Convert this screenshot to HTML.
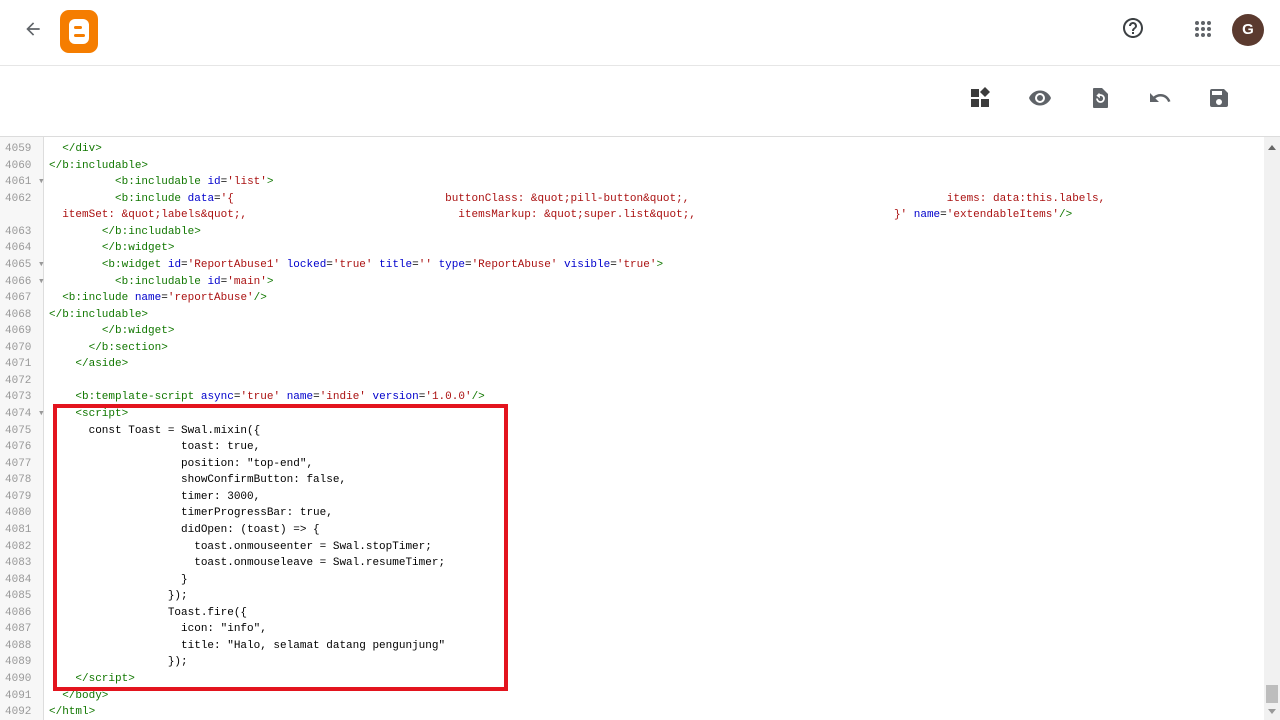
<!DOCTYPE html>
<html><head><meta charset="utf-8"><style>
*{margin:0;padding:0;box-sizing:border-box}
body{width:1280px;height:720px;overflow:hidden;background:#fff;font-family:"Liberation Sans",sans-serif;position:relative}
.top{position:absolute;left:0;top:0;width:1280px;height:66px;border-bottom:1px solid #e6e6e6}
.tb{position:absolute;left:0;top:66px;width:1280px;height:71px;border-bottom:1px solid #dcdcdc}
.ed{position:absolute;left:0;top:137px;width:1264px;height:583px;overflow:hidden}
.gut{position:absolute;left:0;top:0;width:44px;height:583px;background:#f7f7f7;border-right:1px solid #ddd}
pre{font-family:"Liberation Mono","DejaVu Sans Mono",monospace;font-size:11px;line-height:16.56px;position:absolute;top:4px;white-space:pre;color:#000}
.nums{left:0;width:44px;color:#999}
.nums span{display:block;padding-left:5px}
.code{left:49px}
.t{color:#170}.a{color:#00c}.s{color:#a11}
.sb{position:absolute;left:1264px;top:137px;width:16px;height:583px;background:#f1f1f1}
.box{position:absolute;left:53px;top:404px;width:455px;height:287px;border:4px solid #e3141e}
</style></head><body>
<div class="top">
<svg style="position:absolute;left:23px;top:19px" width="20" height="20" viewBox="0 0 24 24"><path d="M20 11H7.8l5.6-5.6L12 4l-8 8 8 8 1.4-1.4L7.8 13H20z" fill="#5f6368"/></svg>
<svg style="position:absolute;left:60px;top:10px" width="38" height="43" viewBox="0 0 38 43"><rect width="38" height="43" rx="9" fill="#f57d00"/><rect x="9" y="9" width="20" height="25" rx="6" fill="#fff"/><rect x="14" y="16" width="8" height="3" rx="1.5" fill="#f57d00"/><rect x="14" y="24" width="11" height="3" rx="1.5" fill="#f57d00"/></svg>
<svg style="position:absolute;left:1121px;top:16px" width="24" height="24" viewBox="0 0 24 24"><path d="M11 18h2v-2h-2v2zm1-16C6.48 2 2 6.48 2 12s4.48 10 10 10 10-4.48 10-10S17.52 2 12 2zm0 18c-4.41 0-8-3.59-8-8s3.59-8 8-8 8 3.59 8 8-3.59 8-8 8zm0-14c-2.21 0-4 1.79-4 4h2c0-1.1.9-2 2-2s2 .9 2 2c0 2-3 1.75-3 5h2c0-2.25 3-2.5 3-5 0-2.21-1.79-4-4-4z" fill="#3c4043"/></svg>
<svg style="position:absolute;left:1191px;top:17px" width="24" height="24" viewBox="0 0 24 24" fill="#5f6368"><circle cx="6" cy="6" r="2"/><circle cx="12" cy="6" r="2"/><circle cx="18" cy="6" r="2"/><circle cx="6" cy="12" r="2"/><circle cx="12" cy="12" r="2"/><circle cx="18" cy="12" r="2"/><circle cx="6" cy="18" r="2"/><circle cx="12" cy="18" r="2"/><circle cx="18" cy="18" r="2"/></svg>
<div style="position:absolute;left:1232px;top:14px;width:32px;height:32px;border-radius:50%;background:#5b3a2f;color:#fff;font-size:15px;font-weight:bold;text-align:center;line-height:32px">G</div>
</div>
<div class="tb">
<svg style="position:absolute;left:968px;top:20px" width="24" height="24" viewBox="0 0 24 24" fill="#3c3c3c"><rect x="3" y="3" width="8" height="8"/><rect x="3" y="13" width="8" height="8"/><rect x="13" y="13" width="8" height="8"/><path d="M17 1l5 5-5 5-5-5z"/></svg>
<svg style="position:absolute;left:1028px;top:20px" width="24" height="24" viewBox="0 0 24 24"><path d="M12 4.5C7 4.5 2.7 7.6 1 12c1.7 4.4 6 7.5 11 7.5s9.3-3.1 11-7.5c-1.7-4.4-6-7.5-11-7.5zM12 17a5 5 0 110-10 5 5 0 010 10zm0-8a3 3 0 100 6 3 3 0 000-6z" fill="#5f6368"/></svg>
<svg style="position:absolute;left:1088px;top:20px" width="24" height="24" viewBox="0 0 24 24"><path d="M6 2h8l6 6v13a1 1 0 01-1 1H6a1 1 0 01-1-1V3a1 1 0 011-1z" fill="#5f6368"/><path d="M9 12.5a3.5 3.5 0 103.5-3.5H11M11 7.5v3l-2-1.5" stroke="#fff" stroke-width="1.8" fill="none"/></svg>
<svg style="position:absolute;left:1148px;top:20px" width="24" height="24" viewBox="0 0 24 24"><path d="M12.5 8c-2.65 0-5.05.99-6.9 2.6L2 7v9h9l-3.62-3.62c1.39-1.16 3.16-1.880 5.12-1.88 3.54 0 6.55 2.31 7.6 5.5l2.37-.78C21.08 11.03 17.15 8 12.5 8z" fill="#5f6368"/></svg>
<svg style="position:absolute;left:1207px;top:20px" width="24" height="24" viewBox="0 0 24 24"><path d="M17 3H5a2 2 0 00-2 2v14a2 2 0 002 2h14a2 2 0 002-2V7l-4-4zm-5 16a3 3 0 110-6 3 3 0 010 6zm3-10H5V5h10v4z" fill="#5f6368"/></svg>
</div>
<div class="ed">
<div class="gut"></div>
<pre class="nums"><span>4059</span><span>4060</span><span>4061 ▾</span><span>4062</span><span> </span><span>4063</span><span>4064</span><span>4065 ▾</span><span>4066 ▾</span><span>4067</span><span>4068</span><span>4069</span><span>4070</span><span>4071</span><span>4072</span><span>4073</span><span>4074 ▾</span><span>4075</span><span>4076</span><span>4077</span><span>4078</span><span>4079</span><span>4080</span><span>4081</span><span>4082</span><span>4083</span><span>4084</span><span>4085</span><span>4086</span><span>4087</span><span>4088</span><span>4089</span><span>4090</span><span>4091</span><span>4092</span></pre>
<pre class="code"><span class="t">  &lt;/div&gt;</span>
<span class="t">&lt;/b:includable&gt;</span>
          <span class="t">&lt;b:includable</span> <span class="a">id</span>=<span class="s">'list'</span><span class="t">&gt;</span>
          <span class="t">&lt;b:include</span> <span class="a">data</span>=<span class="s">'{                                buttonClass: &amp;quot;pill-button&amp;quot;,                                       items: data:this.labels,</span>
<span class="s">  itemSet: &amp;quot;labels&amp;quot;,                                itemsMarkup: &amp;quot;super.list&amp;quot;,                              }'</span> <span class="a">name</span>=<span class="s">'extendableItems'</span><span class="t">/&gt;</span>
        <span class="t">&lt;/b:includable&gt;</span>
        <span class="t">&lt;/b:widget&gt;</span>
        <span class="t">&lt;b:widget</span> <span class="a">id</span>=<span class="s">'ReportAbuse1'</span> <span class="a">locked</span>=<span class="s">'true'</span> <span class="a">title</span>=<span class="s">''</span> <span class="a">type</span>=<span class="s">'ReportAbuse'</span> <span class="a">visible</span>=<span class="s">'true'</span><span class="t">&gt;</span>
          <span class="t">&lt;b:includable</span> <span class="a">id</span>=<span class="s">'main'</span><span class="t">&gt;</span>
  <span class="t">&lt;b:include</span> <span class="a">name</span>=<span class="s">'reportAbuse'</span><span class="t">/&gt;</span>
<span class="t">&lt;/b:includable&gt;</span>
        <span class="t">&lt;/b:widget&gt;</span>
      <span class="t">&lt;/b:section&gt;</span>
    <span class="t">&lt;/aside&gt;</span>

    <span class="t">&lt;b:template-script</span> <span class="a">async</span>=<span class="s">'true'</span> <span class="a">name</span>=<span class="s">'indie'</span> <span class="a">version</span>=<span class="s">'1.0.0'</span><span class="t">/&gt;</span>
    <span class="t">&lt;script&gt;</span>
      const Toast = Swal.mixin({
                    toast: true,
                    position: "top-end",
                    showConfirmButton: false,
                    timer: 3000,
                    timerProgressBar: true,
                    didOpen: (toast) =&gt; {
                      toast.onmouseenter = Swal.stopTimer;
                      toast.onmouseleave = Swal.resumeTimer;
                    }
                  });
                  Toast.fire({
                    icon: "info",
                    title: "Halo, selamat datang pengunjung"
                  });
    <span class="t">&lt;/script&gt;</span>
  <span class="t">&lt;/body&gt;</span>
<span class="t">&lt;/html&gt;</span></pre>
</div>
<div class="box"></div>
<div class="sb">
<div style="position:absolute;left:4px;top:8px;width:0;height:0;border-left:4px solid transparent;border-right:4px solid transparent;border-bottom:5px solid #666"></div>
<div style="position:absolute;left:2px;top:548px;width:12px;height:18px;background:#bdbdbd"></div>
<div style="position:absolute;left:4px;top:572px;width:0;height:0;border-left:4px solid transparent;border-right:4px solid transparent;border-top:5px solid #999"></div>
</div>
</body></html>
